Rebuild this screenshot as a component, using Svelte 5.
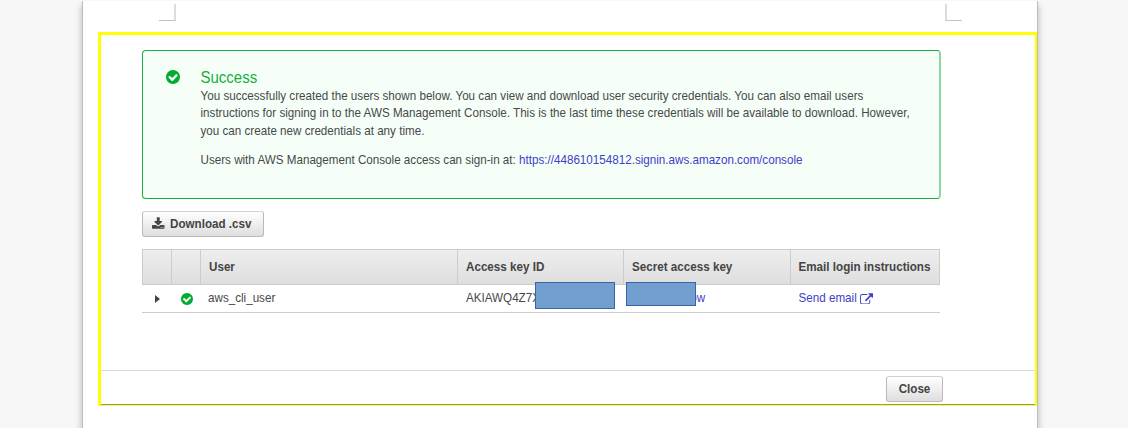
<script>
  const checkPath = 'M1412 734q0-28-18-46l-91-90q-19-19-45-19t-45 19l-408 407-226-226q-19-19-45-19t-45 19l-91 90q-18 18-18 46 0 27 18 45l362 362q19 19 45 19 27 0 46-19l543-543q18-18 18-45zm252 162q0 209-103 385.5t-279.5 279.5-385.5 103-385.5-103-279.5-279.5-103-385.5 103-385.5 279.5-279.5 385.5-103 385.5 103 279.5 279.5 103 385.5z';
  const headings = ['User', 'Access key ID', 'Secret access key', 'Email login instructions'];
  const users = [{ name: 'aws_cli_user', key: 'AKIAWQ4Z7X' }];
</script>

<div class="sheet">
  <div class="crops">
    <span class="crop left"></span>
    <span class="crop right"></span>
  </div>

  <main class="frame">
    <section class="content">
      <div class="alert">
        <svg class="check" viewBox="128 128 1536 1536"><path d={checkPath} /></svg>
        <div class="message">
          <h1>Success</h1>
          <p>You successfully created the users shown below. You can view and download user security credentials. You can also email users<br />instructions for signing in to the AWS Management Console. This is the last time these credentials will be available to download. However,<br />you can create new credentials at any time.</p>
          <p>Users with AWS Management Console access can sign-in at: <a href="#console">https://448610154812.signin.aws.amazon.com/console</a></p>
        </div>
      </div>

      <button class="download">
        <svg viewBox="64 0 1664 1536"><path d="M1344 1344q0-26-19-45t-45-19-45 19-19 45 19 45 45 19 45-19 19-45zm256 0q0-26-19-45t-45-19-45 19-19 45 19 45 45 19 45-19 19-45zm128-224v320q0 40-28 68t-68 28h-1472q-40 0-68-28t-28-68v-320q0-40 28-68t68-28h465l135 136q58 56 136 56t136-56l136-136h464q40 0 68 28t28 68zm-325-569q17 41-14 70l-448 448q-18 19-45 19t-45-19l-448-448q-31-29-14-70 17-39 59-39h256v-448q0-26 19-45t45-19h256q26 0 45 19t19 45v448h256q42 0 59 39z" /></svg>
        <span class="tall">Download .csv</span>
      </button>

      <div class="table">
        <div class="row head">
          <div></div>
          <div></div>
          {#each headings as heading}
            <div><span class="tall">{heading}</span></div>
          {/each}
        </div>
        {#each users as user}
          <div class="row body">
            <div><svg class="caret" viewBox="0 0 5 8"><path d="M0 0L5 4L0 8Z" /></svg></div>
            <div><svg class="check small" viewBox="128 128 1536 1536"><path d={checkPath} /></svg></div>
            <div><span class="tall">{user.name}</span></div>
            <div><span class="tall">{user.key}</span><span class="mask key"></span></div>
            <div><a class="tall show" href="#show">Show</a><span class="mask secret"></span></div>
            <div>
              <a class="tall" href="#email">Send email</a>
              <svg class="external" viewBox="0 0 1792 1536"><path d="M1408 928v320q0 119-84.500 203.500t-203.500 84.500h-832q-119 0-203.500-84.500t-84.500-203.500v-832q0-119 84.500-203.500t203.500-84.500h704q14 0 23 9t9 23v64q0 14-9 23t-23 9h-704q-66 0-113 47t-47 113v832q0 66 47 113t113 47h832q66 0 113-47t47-113v-320q0-14 9-23t23-9h64q14 0 23 9t9 23zm384-864v512q0 26-19 45t-45 19-45-19l-176-176-652 652q-10 10-23 10t-23-10l-114-114q-10-10-10-23t10-23l652-652-176-176q-19-19-19-45t19-45 45-19h512q26 0 45 19t19 45z" /></svg>
            </div>
          </div>
        {/each}
      </div>
    </section>

    <footer><button class="close"><span class="tall">Close</span></button></footer>
  </main>
</div>

<style>
  :global(body) {
    background: #f7f7f7;
    overflow: hidden;
  }

  .sheet,
  .sheet * {
    box-sizing: border-box;
  }

  .sheet {
    width: 956px;
    height: 440px;
    margin: 1px 0 0 82px;
    border: solid #bdbdbd;
    border-width: 0 1px;
    background: #fff;
    box-shadow: 0 4px 7px rgba(0, 0, 0, 0.28);
    clip-path: inset(0 -12px);
    font: 11.650px/17.300px "Liberation Sans", Arial, sans-serif;
    color: #484848;
  }

  .crops {
    display: flex;
    justify-content: space-between;
    height: 31px;
    padding: 3px 75px 0 76px;
  }

  .crop {
    width: 17px;
    height: 17px;
    border-bottom: 1px solid #c2c2c2;
  }

  .crop.left {
    border-right: 2px solid #dcdcdc;
  }

  .crop.right {
    border-left: 2px solid #dcdcdc;
  }

  .frame {
    display: flex;
    flex-direction: column;
    width: 939px;
    height: 374px;
    margin-left: 15px;
    border: solid #ff0;
    border-width: 3px 2px 1px 3px;
    box-shadow: inset 0 -1px #92929c;
  }

  .content {
    height: 335px;
    padding: 15px 0 0 41px;
  }

  .alert {
    display: flex;
    width: 799px;
    height: 149px;
    padding: 18px 0 0 23px;
    border: 1px solid #18ae43;
    border-right: 2px solid #8cd8a2;
    border-radius: 4px;
    background: #f5fff8;
  }

  .check {
    flex: none;
    width: 14px;
    height: 14px;
    margin-top: 1px;
    fill: #00ac31;
  }

  .check.small {
    width: 12px;
    height: 12px;
    margin: 0;
  }

  .message {
    padding-left: 20.500px;
    white-space: nowrap;
    transform: scaleY(1.15);
    transform-origin: 0 0;
  }

  h1 {
    margin: -1px 0 1px;
    font-size: 15px;
    line-height: 15.100px;
    font-weight: 400;
    color: #16ae40;
  }

  p {
    margin: 0 0 10.300px;
    line-height: 15.050px;
  }

  a {
    color: #4040c8;
    text-decoration: none;
  }

  .tall {
    display: inline-block;
    transform: translateY(-1.7px) scaleY(1.15);
  }

  .head .tall {
    transform: translateY(-0.5px) scaleY(1.15);
  }

  button {
    display: flex;
    align-items: center;
    justify-content: center;
    height: 26px;
    padding: 0;
    border: 1px solid #bababa;
    border-top-color: #d2d2d2;
    border-radius: 3px;
    background: linear-gradient(#fff, #dedede);
    color: #444;
    font: bold 11.650px "Liberation Sans", Arial, sans-serif;
  }

  .download {
    width: 122px;
    margin-top: 12px;
    padding-right: 2px;
    gap: 5px;
  }

  .download svg {
    width: 12.500px;
    height: 12px;
    margin-top: -3px;
    fill: #444;
  }

  .table {
    width: 798px;
    margin-top: 12px;
  }

  .row {
    display: grid;
    grid-template-columns: 28px 29px 257px 166px 166.500px 1fr;
    border: 1px solid #ccc;
  }

  .row > div {
    display: flex;
    align-items: center;
    position: relative;
    padding-left: 8px;
    white-space: nowrap;
  }

  .head {
    height: 36px;
    background: linear-gradient(#eee, #dedede);
    font-weight: 700;
    color: #444;
  }

  .head > div + div {
    border-left: 1px solid #ccc;
  }

  .body {
    height: 28px;
    border-width: 0 0 1px;
    padding-left: 1px;
  }

  .row.body > div:nth-child(1) {
    padding-left: 12px;
  }

  .row.body > div:nth-child(2) {
    padding-left: 10px;
  }

  .row.body > div:nth-child(n + 4) {
    padding-left: 9px;
  }

  .caret {
    width: 5px;
    height: 8px;
    fill: #444;
  }

  .external {
    width: 13px;
    height: 11.500px;
    margin: 0 0 0 3.500px;
    fill: #4040c8;
  }

  .mask {
    position: absolute;
    background: #729fcf;
    border: 1px solid #3465a4;
  }

  .mask.key {
    left: 78px;
    top: -3px;
    width: 80px;
    height: 27px;
  }

  .mask.secret {
    left: 3px;
    top: -3px;
    width: 70px;
    height: 24px;
  }

  .show {
    margin-left: 44px;
  }

  footer {
    display: flex;
    flex: 1;
    justify-content: flex-end;
    padding: 5px 92px 0 0;
    border-top: 1px solid #d9d9d9;
  }

  .close {
    width: 57px;
  }
</style>
